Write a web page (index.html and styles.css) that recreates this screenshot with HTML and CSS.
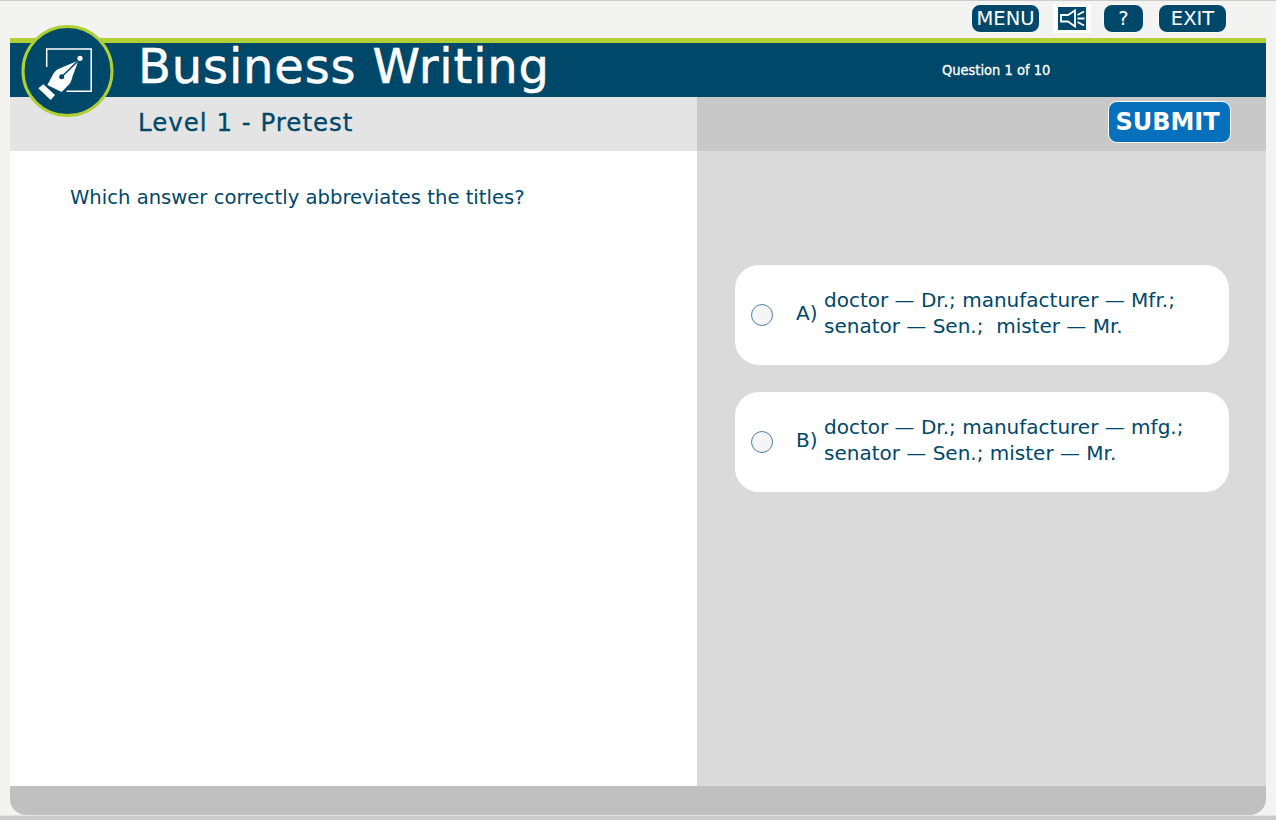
FILE: index.html
```html
<!DOCTYPE html>
<html lang="en">
<head>
<meta charset="utf-8">
<title>Business Writing</title>
<link rel="stylesheet" href="styles.css">
</head>
<body>
<div class="page">
  <nav class="topnav">
    <button class="navbtn menu">MENU</button>
    <button class="sound" aria-label="Sound">
      <svg width="28" height="23" viewBox="0 0 28 23">
        <path d="M3 8H10L17 3.500V19.500L10 14.500H3Z" fill="none" stroke="#fff" stroke-width="1.800"/>
        <path d="M19.500 8L26 4.500M19.500 11.500H26.500M19.500 15L26 18.500" fill="none" stroke="#fff" stroke-width="1.800"/>
      </svg>
    </button>
    <button class="navbtn help">?</button>
    <button class="navbtn exit">EXIT</button>
  </nav>
  <main class="panel">
    <div class="logo">
      <svg width="94" height="94" viewBox="0 0 94 94">
        <circle cx="46.500" cy="46" r="44.500" fill="#004869" stroke="#b0cf35" stroke-width="3"/>
        <path d="M25.700 42V24H70.200V66.300H45.500" fill="none" stroke="#fff" stroke-width="1.500"/>
        <path d="M57.500 35.500L39 43.300C35 45 33.500 47 32 49.500L26.300 60L40.700 67L47.500 60C49.500 58 50.500 55.500 51.500 51.500Z" fill="#fff"/>
        <path d="M58 35L41 51.500" stroke="#004869" stroke-width="1.500" fill="none"/>
        <circle cx="40.700" cy="51.700" r="2.500" fill="#004869"/>
        <circle cx="59" cy="33.300" r="2.600" fill="#fff"/>
        <path d="M17.300 63.300L22.300 59.300L34 70L29.700 75Z" fill="#fff"/>
      </svg>
    </div>
    <header class="banner">
      <h1 class="title">Business Writing</h1>
      <div class="progress">Question 1 of 10</div>
    </header>
    <div class="subbar">
      <h2 class="level">Level 1 - Pretest</h2>
      <div class="submit-area">
        <button class="submit">SUBMIT</button>
      </div>
    </div>
    <section class="content">
      <div class="question">
        <p>Which answer correctly abbreviates the titles?</p>
      </div>
      <div class="answers">
        <label class="option">
          <span class="radio"></span>
          <span class="letter">A)</span>
          <span class="text">doctor — Dr.; manufacturer — Mfr.;<br>senator — Sen.;&nbsp; mister — Mr.</span>
        </label>
        <label class="option">
          <span class="radio"></span>
          <span class="letter">B)</span>
          <span class="text">doctor — Dr.; manufacturer — mfg.;<br>senator — Sen.; mister — Mr.</span>
        </label>
      </div>
    </section>
    <footer class="footer"></footer>
  </main>
  <div class="baseline"></div>
</div>
</body>
</html>
```
FILE: styles.css
```css
* { box-sizing: border-box; }
html, body { margin: 0; padding: 0; height: 100%; overflow: hidden; }
body {
  background: #f3f3f1;
  font-family: "DejaVu Sans", Verdana, sans-serif;
  color: #004869;
}
.page {
  width: 1276px;
  height: 820px;
  display: flex;
  flex-direction: column;
  border-top: 1px solid #cbcbcb;
}
.topnav {
  height: 37px;
  display: flex;
  justify-content: flex-end;
  align-items: flex-start;
  padding: 3px 49px 0 0;
}
.navbtn {
  height: 29px;
  margin: 0;
  padding: 0;
  border: 1px solid #fff;
  border-radius: 9px;
  background: #004869;
  color: #fff;
  font: 19.500px "DejaVu Sans", sans-serif;
}
.menu { width: 69px; }
.help { width: 41px; margin-left: 12px; }
.exit { width: 69px; margin-left: 14px; }
.sound {
  width: 38px;
  height: 29px;
  margin: 0 0 0 13px;
  padding: 0;
  border: solid #fff;
  border-width: 3px 5px;
  background: #004869;
  display: flex;
}
.panel {
  position: relative;
  flex: 1;
  margin: 0 10px;
  display: flex;
  flex-direction: column;
  min-height: 0;
}
.logo {
  position: absolute;
  left: 11px;
  top: -13px;
  width: 94px;
  height: 94px;
}
.logo svg { display: block; }
.banner {
  height: 59px;
  flex: none;
  background: #004869;
  border-top: 5px solid #b0cf35;
  display: grid;
  grid-template-columns: 932px auto;
  color: #fff;
}
.title {
  margin: 0;
  padding-left: 128px;
  font-size: 48px;
  font-weight: 400;
  line-height: 46px;
  letter-spacing: 0.850px;
  -webkit-text-stroke: 0.500px #fff;
}
.progress {
  font: 400 14.500px "DejaVu Sans Condensed", "DejaVu Sans", sans-serif;
  line-height: 54px;
  -webkit-text-stroke: 0.300px #fff;
}
.subbar {
  height: 54px;
  flex: none;
  display: grid;
  grid-template-columns: 687px 1fr;
}
.level {
  margin: 0;
  padding: 11px 0 0 128px;
  background: #e4e4e4;
  font-size: 24.500px;
  font-weight: 400;
  line-height: 30px;
  letter-spacing: 1px;
  -webkit-text-stroke: 0.300px #004869;
}
.submit-area {
  background: #c8c8c8;
  display: flex;
  justify-content: flex-end;
  padding: 4px 35px 0 0;
}
.submit {
  width: 123px;
  height: 42px;
  padding: 0 4px 1px 0;
  border: 1px solid #fff;
  border-radius: 9px;
  background: #0670bd;
  color: #fff;
  font: 700 24px "DejaVu Sans", sans-serif;
}
.content {
  flex: 1;
  min-height: 0;
  display: grid;
  grid-template-columns: 687px 1fr;
}
.question {
  background: #fff;
  padding: 35px 60px 0;
}
.question p {
  margin: 0;
  font-size: 19.600px;
  line-height: 24px;
}
.answers {
  background: #dadada;
  padding: 114px 37px 0 38px;
  display: flex;
  flex-direction: column;
  gap: 27px;
}
.option {
  height: 100px;
  display: flex;
  align-items: center;
  background: #fff;
  border-radius: 24px;
  padding-left: 16px;
  font-size: 20px;
  line-height: 26px;
}
.radio {
  width: 22px;
  height: 22px;
  flex: none;
  border: 1.500px solid #4f83a8;
  border-radius: 50%;
  background: #f5f5f5;
}
.letter { margin: 0 0 4px 23px; width: 28px; flex: none; }
.text { white-space: nowrap; margin-bottom: 4px; }
.footer {
  height: 29px;
  flex: none;
  background: #c0c0c0;
  border-radius: 0 0 16px 16px;
}
.baseline {
  height: 5px;
  flex: none;
  background: linear-gradient(#e4e4e4 0 1px, #c9cbcb 1px);
}
```
